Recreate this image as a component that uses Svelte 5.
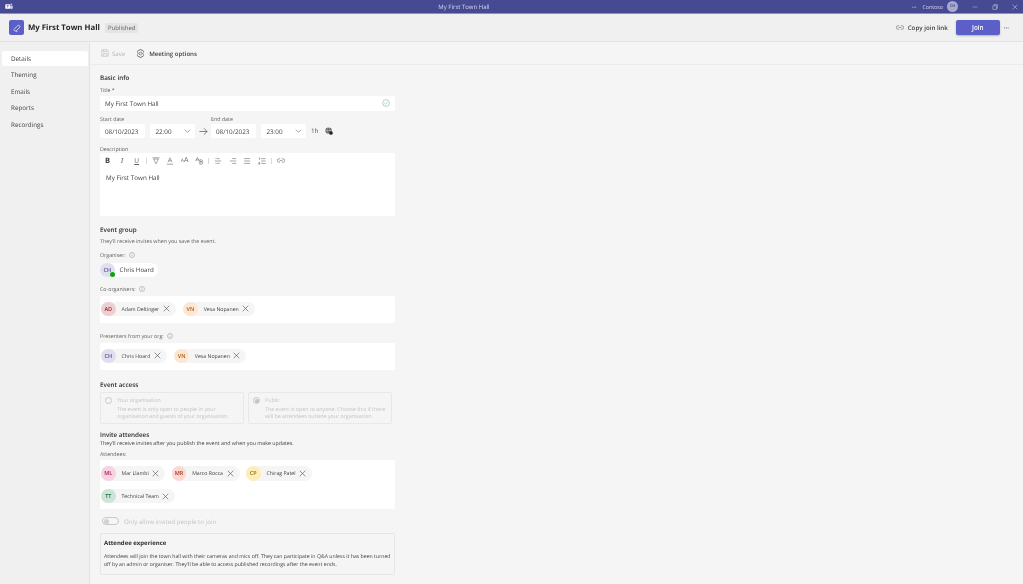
<script lang="ts">
  const nav = ['Details', 'Theming', 'Emails', 'Reports', 'Recordings'];

  const coOrganisers = [
    { initials: 'AD', name: 'Adam Deltinger', tone: 'red' },
    { initials: 'VN', name: 'Vesa Nopanen', tone: 'orange' }
  ];
  const presenters = [
    { initials: 'CH', name: 'Chris Hoard', tone: 'violet' },
    { initials: 'VN', name: 'Vesa Nopanen', tone: 'orange' }
  ];
  const attendees = [
    { initials: 'ML', name: 'Mar Llambi', tone: 'pink' },
    { initials: 'MR', name: 'Marco Rocca', tone: 'salmon' },
    { initials: 'CP', name: 'Chirag Patel', tone: 'yellow' },
    { initials: 'TT', name: 'Technical Team', tone: 'green' }
  ];
</script>

{#snippet info()}
  <svg class="info" viewBox="0 0 10 10" width="6" height="6">
    <circle cx="5" cy="5" r="4.2" fill="none" stroke="#888" stroke-width="0.8" />
    <path d="M5 4.4v2.8M5 2.6v.8" stroke="#888" stroke-width="0.8" />
  </svg>
{/snippet}

{#snippet chip(p)}
  <div class="chip">
    <span class="avatar {p.tone}">{p.initials}</span>
    <span class="chip-name">{p.name}</span>
    <svg viewBox="0 0 10 10" width="7" height="7">
      <path d="M1 1l8 8M9 1l-8 8" stroke="#424242" stroke-width="0.8" fill="none" />
    </svg>
  </div>
{/snippet}

{#snippet chevron()}
  <svg class="chev" viewBox="0 0 10 6" width="7" height="4">
    <path d="M1 1l4 4 4-4" stroke="#616161" stroke-width="0.9" fill="none" />
  </svg>
{/snippet}

<div class="app">
  <div class="titlebar">
    <svg class="teams" viewBox="0 0 12 10" width="8" height="7">
      <circle cx="9.4" cy="2" r="1.4" fill="#c5c8ef" />
      <path d="M7.5 4h4.2v3a2 2 0 0 1-4.2 0z" fill="#c5c8ef" />
      <rect x="0.5" y="1.5" width="7" height="7" rx="0.8" fill="#fff" />
      <path d="M2.2 3.4h3.6M4 3.4v3.4" stroke="#464a92" stroke-width="0.9" />
    </svg>
    <span class="window-title">My First Town Hall</span>
    <div class="window-right">
      <span class="dots">···</span>
      <span class="tenant">Contoso</span>
      <span class="me">CH</span>
      <svg viewBox="0 0 10 10" width="6" height="6"><path d="M1 5h8" stroke="#c9cbe6" stroke-width="0.8" /></svg>
      <svg viewBox="0 0 10 10" width="6" height="6"><path d="M1.5 3h6v6h-6zM3.5 3V1h5.500v6H7.500" stroke="#c9cbe6" stroke-width="0.9" fill="none" /></svg>
      <svg viewBox="0 0 10 10" width="6" height="6"><path d="M1 1l8 8M9 1l-8 8" stroke="#c9cbe6" stroke-width="0.9" /></svg>
    </div>
  </div>

  <header class="header">
    <span class="event-icon">
      <svg viewBox="0 0 12 12" width="10" height="10">
        <path d="M2.500 7.500 7.500 2.500c1.200.2 2 1 2.200 2.200L4.800 9.700c-1.200.3-2.700-.9-2.300-2.200z" fill="none" stroke="#fff" stroke-width="0.8" />
        <path d="M4.800 9.700c.3.800 1.200 1 1.800.4" fill="none" stroke="#fff" stroke-width="0.8" />
      </svg>
    </span>
    <h1>My First Town Hall</h1>
    <span class="badge">Published</span>
    <div class="header-right">
      <svg viewBox="0 0 14 8" width="8" height="5">
        <path d="M5.500 1H3.500a3 3 0 0 0 0 6h2M8.500 1h2a3 3 0 0 1 0 6h-2M4.500 4h5" fill="none" stroke="#616161" stroke-width="1" />
      </svg>
      <span class="copy">Copy join link</span>
      <button class="join" type="button">Join</button>
      <span class="more">···</span>
    </div>
  </header>

  <div class="body">
    <nav class="side">
      {#each nav as item, i}
        <div class="nav-item" class:active={i === 0}>{item}</div>
      {/each}
    </nav>

    <main class="main">
      <div class="toolbar">
        <span class="save">
          <svg viewBox="0 0 10 10" width="8" height="8">
            <path d="M1 1h6.500L9 2.500V9H1zM3 1v2.500h3.500V1M2.800 9V5.800h4.400V9" fill="none" stroke="#bdbdbd" stroke-width="0.8" />
          </svg>
          Save
        </span>
        <span class="options">
          <svg viewBox="0 0 10 10" width="9" height="9">
            <circle cx="5" cy="5" r="1.500" fill="none" stroke="#555" stroke-width="0.7" />
            <path d="M4 .6h2l.4 1.300 1.300-.4 1 1.700-1 1 0 1.600 1 1-1 1.700-1.300-.4L6 9.400H4l-.4-1.300-1.300.4-1-1.700 1-1V4.200l-1-1 1-1.700 1.300.4z" fill="none" stroke="#555" stroke-width="0.7" />
          </svg>
          Meeting options
        </span>
      </div>

      <div class="form">
        <h2 class="first">Basic info</h2>
        <div class="label title-label">Title *</div>
        <div class="input title-input">
          <span>My First Town Hall</span>
          <svg viewBox="0 0 10 10" width="8" height="8">
            <circle cx="5" cy="5" r="4.200" fill="none" stroke="#6bb58a" stroke-width="0.7" />
            <path d="M3 5.200l1.500 1.400L7 3.600" fill="none" stroke="#6bb58a" stroke-width="0.7" />
          </svg>
        </div>

        <div class="dates">
          <div class="date-col">
            <div class="label">Start date</div>
            <div class="date-row">
              <div class="input date">08/10/2023</div>
              <div class="input time"><span>22:00</span>{@render chevron()}</div>
            </div>
          </div>
          <svg class="arrow" viewBox="0 0 10 10" width="9" height="9">
            <path d="M.5 5h8.500M5.500 1.500 9 5 5.500 8.500" fill="none" stroke="#424242" stroke-width="0.7" />
          </svg>
          <div class="date-col">
            <div class="label">End date</div>
            <div class="date-row">
              <div class="input date">08/10/2023</div>
              <div class="input time"><span>23:00</span>{@render chevron()}</div>
            </div>
          </div>
          <span class="duration">1h</span>
          <svg class="globe" viewBox="0 0 10 10" width="8" height="8">
            <circle cx="4.500" cy="4.500" r="4" fill="#616161" />
            <path d="M.5 4.500h8M4.500.5c-2.500 2.500-2.500 5.500 0 8M4.500.5c2.500 2.500 2.500 5.500 0 8" fill="none" stroke="#eee" stroke-width="0.5" />
            <circle cx="7.500" cy="7.500" r="2.300" fill="#242424" />
          </svg>
        </div>

        <div class="label desc-label">Description</div>
        <div class="editor">
          <div class="rte">
            <b class="bold">B</b>
            <i class="ital">I</i>
            <span class="under">U</span>
            <span class="sep"></span>
            <svg viewBox="0 0 10 10" width="8" height="8"><path d="M.5 1h9M2 2.500 5 8.500 8 2.500z" fill="none" stroke="#616161" stroke-width="0.7" /></svg>
            <svg viewBox="0 0 10 10" width="8" height="8"><path d="M2.500 6.500 5 1l2.500 5.500M3.400 4.700h3.200M1 9h8" fill="none" stroke="#616161" stroke-width="0.7" /></svg>
            <span class="aa"><small>A</small>A</span>
            <svg viewBox="0 0 10 10" width="8" height="8"><path d="M.8 5 3 .6 5.200 5M1.500 3.600h3M6 3.500h2a1 1 0 0 1 0 2.500H6zM6 6h2.200a1.300 1.300 0 0 1 0 3H6z" fill="none" stroke="#616161" stroke-width="0.7" /></svg>
            <span class="sep"></span>
            <svg viewBox="0 0 10 10" width="8" height="8"><path d="M1 5h8M3 2h4M3 8h4M1 2h.8M1 8h.8" fill="none" stroke="#616161" stroke-width="0.7" /></svg>
            <svg viewBox="0 0 10 10" width="8" height="8"><path d="M1 5h8M4 2h5M4 8h5" fill="none" stroke="#616161" stroke-width="0.7" /></svg>
            <svg viewBox="0 0 10 10" width="8" height="8"><path d="M1.500 2H9M1.500 5H9M1.500 8H9" fill="none" stroke="#616161" stroke-width="0.7" /></svg>
            <svg viewBox="0 0 10 10" width="8" height="8"><path d="M4 2h5.500M4 5h5.500M4 8h5.500M1 1h1v2.500M.8 7h1.500v1H1v1h1.400" fill="none" stroke="#616161" stroke-width="0.7" /></svg>
            <span class="sep"></span>
            <svg viewBox="0 0 14 8" width="8" height="5"><path d="M5.500 1H3.500a3 3 0 0 0 0 6h2M8.500 1h2a3 3 0 0 1 0 6h-2M4.500 4h5" fill="none" stroke="#616161" stroke-width="1" /></svg>
          </div>
          <p>My First Town Hall</p>
        </div>

        <h2 class="group-title">Event group</h2>
        <div class="hint">They'll receive invites when you save the event.</div>
        <div class="label organiser-label">Organiser: {@render info()}</div>
        <div class="organiser">
          <span class="avatar violet">CH<span class="presence"></span></span>
          <span class="organiser-name">Chris Hoard</span>
        </div>

        <div class="label people-label coorg">Co-organisers: {@render info()}</div>
        <div class="people">
          {#each coOrganisers as p}{@render chip(p)}{/each}
        </div>

        <div class="label people-label presenters">Presenters from your org: {@render info()}</div>
        <div class="people">
          {#each presenters as p}{@render chip(p)}{/each}
        </div>

        <h2 class="access-title">Event access</h2>
        <div class="access">
          <div class="card">
            <span class="radio"></span>
            <div>
              <div class="card-title">Your organisation</div>
              <div class="card-text">The event is only open to people in your organisation and guests of your organisation.</div>
            </div>
          </div>
          <div class="card">
            <span class="radio on"></span>
            <div>
              <div class="card-title">Public</div>
              <div class="card-text">The event is open to anyone. Choose this if there will be attendees outside your organisation.</div>
            </div>
          </div>
        </div>

        <h2 class="invite-title">Invite attendees</h2>
        <div class="invite-hint">They'll receive invites after you publish the event and when you make updates.</div>
        <div class="label attendees-label">Attendees:</div>
        <div class="people attendees">
          {#each attendees as p}{@render chip(p)}{/each}
        </div>

        <div class="only">
          <span class="toggle"><span class="knob"></span></span>
          <span>Only allow invited people to join</span>
        </div>

        <div class="experience">
          <h3>Attendee experience</h3>
          <p>Attendees will join the town hall with their cameras and mics off. They can participate in Q&amp;A unless it has been turned off by an admin or organiser. They'll be able to access published recordings after the event ends.</p>
        </div>
      </div>
    </main>
  </div>
</div>

<style>
  :global(body) {
    margin: 0;
    background: #f5f5f5;
  }

  .app {
    width: 1023px;
    height: 584px;
    overflow: hidden;
    display: flex;
    flex-direction: column;
    font-family: 'Open Sans', 'Noto Sans', sans-serif;
    text-rendering: geometricPrecision;
    will-change: transform;
    color: #424242;
    font-size: 5.5px;
  }

  .titlebar {
    flex: 0 0 14px;
    box-sizing: border-box;
    display: flex;
    align-items: center;
    background: #464a92;
    border-bottom: 1px solid #8c8fbf;
    padding: 0 5px;
    color: #d6d7ec;
  }

  .teams {
    flex: none;
  }

  .window-title {
    flex: 1;
    text-align: center;
    font-size: 6px;
    padding-left: 3px;
  }

  .window-right {
    display: flex;
    align-items: center;
    font-size: 5.3px;
  }

  .dots {
    margin-right: 6px;
    font-weight: 700;
  }

  .tenant {
    margin-right: 4px;
  }

  .me {
    width: 11px;
    height: 11px;
    border-radius: 50%;
    background: #a8a9cf;
    color: #3c3f80;
    font-size: 4px;
    font-weight: 600;
    display: flex;
    align-items: center;
    justify-content: center;
  }

  .window-right svg {
    margin-left: 14px;
  }

  .header {
    flex: 0 0 28px;
    box-sizing: border-box;
    display: flex;
    align-items: center;
    background: #f0f0f0;
    border-bottom: 1px solid #e3e3e3;
    padding: 0 9px;
  }

  .event-icon {
    width: 15px;
    height: 15px;
    border-radius: 2px;
    background: #5b5fc7;
    display: flex;
    align-items: center;
    justify-content: center;
    margin-right: 4px;
  }

  h1 {
    margin: 0;
    font-size: 7.8px;
    font-weight: 700;
    color: #242424;
    margin-right: 5px;
  }

  .badge {
    background: #e4e4e4;
    color: #616161;
    font-size: 6px;
    padding: 1px 3px;
    border-radius: 1.500px;
  }

  .header-right {
    margin-left: auto;
    display: flex;
    align-items: center;
  }

  .copy {
    font-size: 6.2px;
    font-weight: 600;
    margin: 0 8px 0 4px;
  }

  .join {
    width: 44px;
    height: 15px;
    border: 0;
    border-radius: 2px;
    background: #5b5fc7;
    color: #fff;
    font: 600 6.3px 'Open Sans', sans-serif;
    box-shadow: 0 1px 2px rgba(0, 0, 0, 0.25);
    padding: 0;
  }

  .more {
    margin: 0 5px 0 4px;
    font-size: 6px;
    font-weight: 700;
    color: #616161;
  }

  .body {
    flex: 1;
    display: flex;
    min-height: 0;
  }

  .side {
    flex: 0 0 90px;
    box-sizing: border-box;
    background: #f0f0f0;
    border-right: 1px solid #e3e3e3;
    padding: 9px 1px 0 2px;
  }

  .nav-item {
    height: 15px;
    margin-bottom: 1.400px;
    padding-left: 9px;
    display: flex;
    align-items: center;
    border-radius: 2px;
    font-size: 6.3px;
    color: #424242;
  }

  .nav-item.active {
    background: #fff;
  }

  .main {
    flex: 1;
    min-width: 0;
    background: #f5f5f5;
  }

  .toolbar {
    height: 22px;
    border-bottom: 1px solid #ebebeb;
    display: flex;
    align-items: center;
    padding-left: 11px;
    font-size: 6.1px;
  }

  .save {
    display: flex;
    align-items: center;
    gap: 3px;
    color: #b5b5b5;
    margin-right: 11px;
  }

  .options {
    display: flex;
    align-items: center;
    gap: 4px;
    font-weight: 600;
    color: #424242;
  }

  .form {
    width: 295px;
    padding-left: 10px;
  }

  h2 {
    margin: 0;
    font-size: 6.3px;
    line-height: 9px;
    font-weight: 600;
    color: #303030;
  }

  h2.first {
    margin-top: 8px;
  }

  .label {
    font-size: 5.3px;
    line-height: 7px;
    color: #616161;
    display: flex;
    align-items: center;
    gap: 3px;
  }

  .title-label {
    margin-top: 5px;
    margin-bottom: 2px;
  }

  .input {
    background: #fff;
    border-radius: 1.500px;
    box-sizing: border-box;
    display: flex;
    align-items: center;
    font-size: 6.300px;
    color: #424242;
  }

  .title-input {
    height: 14.500px;
    padding: 0 5px 0 5px;
    justify-content: space-between;
  }

  .dates {
    display: flex;
    align-items: flex-end;
    margin-top: 5px;
  }

  .date-col .label {
    margin-bottom: 1.500px;
  }

  .date-row {
    display: flex;
    gap: 4.500px;
  }

  .date {
    width: 45px;
    height: 14px;
    padding-left: 5px;
  }

  .time {
    width: 45px;
    height: 14px;
    padding: 0 4px 0 6px;
    justify-content: space-between;
  }

  .arrow {
    margin: 0 3.500px 2.500px 4px;
  }

  .duration {
    margin: 0 0 3px 5.500px;
    font-size: 6.300px;
    color: #4f4f7a;
  }

  .globe {
    margin: 0 0 3px 6.500px;
  }

  .desc-label {
    margin-top: 8px;
  }

  .editor {
    height: 63px;
    background: #fff;
    border-radius: 1.500px;
  }

  .rte {
    height: 15px;
    display: flex;
    align-items: center;
    padding-left: 3.600px;
    gap: 6.500px;
    font-size: 7.500px;
    color: #616161;
  }

  .rte > b,
  .rte > i,
  .rte > span:not(.sep),
  .rte > svg {
    flex: 0 0 8px;
    text-align: center;
  }

  .bold {
    color: #424242;
  }

  .ital {
    font-family: 'Liberation Serif', serif;
  }

  .under {
    text-decoration: underline;
    font-size: 6.500px;
  }

  .aa small {
    font-size: 5px;
  }

  .aa {
    font-size: 7px;
    line-height: 8px;
    white-space: nowrap;
  }

  .sep {
    width: 1px;
    height: 6px;
    background: #d8d8d8;
    margin: 0 -1.500px;
  }

  .editor p {
    margin: 5px 0 0 6px;
    font-size: 6.300px;
  }

  .group-title {
    margin-top: 9px;
  }

  .hint {
    margin-top: 3.500px;
    line-height: 7px;
    font-size: 5.300px;
    color: #616161;
  }

  .organiser-label {
    margin-top: 7px;
    margin-bottom: 4px;
  }

  .organiser {
    display: inline-flex;
    align-items: center;
    height: 14.500px;
    background: #fff;
    border-radius: 8px;
    padding-right: 4px;
    font-size: 6.200px;
    gap: 5px;
  }

  .avatar {
    flex: none;
    position: relative;
    width: 14.500px;
    height: 14.500px;
    border-radius: 50%;
    display: flex;
    align-items: center;
    justify-content: center;
    font-size: 5.500px;
    font-weight: 600;
  }

  .presence {
    position: absolute;
    right: 0;
    bottom: 0;
    width: 5px;
    height: 5px;
    border-radius: 50%;
    background: #13a10e;
  }

  .violet { background: #e0dff0; color: #4f4b8f; }
  .red { background: #eccfd2; color: #a4262c; }
  .orange { background: #fde7d3; color: #a8591a; }
  .pink { background: #f7d3e2; color: #a12260; }
  .salmon { background: #fbd9d3; color: #a8391f; }
  .yellow { background: #fdeeb9; color: #8f6a10; }
  .green { background: #cfe4d8; color: #1f6f48; }

  .people-label {
    margin-top: 7.500px;
    margin-bottom: 3px;
  }

  .coorg {
    margin-top: 8.500px;
  }

  .presenters {
    margin-top: 10px;
  }

  .people {
    background: #fff;
    min-height: 27px;
    box-sizing: border-box;
    padding: 6px 1px;
    display: flex;
    flex-wrap: wrap;
    gap: 7px 7.500px;
    border-radius: 1.500px;
  }

  .chip {
    display: flex;
    align-items: center;
    height: 14.500px;
    background: #f5f5f5;
    border-radius: 8px;
    font-size: 5.200px;
    color: #424242;
    padding-right: 6px;
  }

  .chip-name {
    margin: 0 3.500px 0 6px;
  }

  .access-title {
    margin-top: 10.500px;
  }

  .access {
    display: flex;
    gap: 4px;
    margin-top: 2.500px;
  }

  .card {
    width: 144px;
    height: 32px;
    box-sizing: border-box;
    border: 1px solid #e8e8e8;
    border-radius: 2px;
    display: flex;
    padding: 4px 4px 0 4px;
    gap: 5px;
    color: #c4c4c4;
    font-size: 5.300px;
    line-height: 7px;
  }

  .card-title {
    margin-bottom: 2.500px;
  }

  .radio {
    flex: none;
    width: 7px;
    height: 7px;
    border-radius: 50%;
    border: 0.700px solid #c8c8c8;
    box-sizing: border-box;
    margin-top: 0.500px;
    display: flex;
    align-items: center;
    justify-content: center;
  }

  .radio.on::after {
    content: '';
    width: 4px;
    height: 4px;
    border-radius: 50%;
    background: #c4c4c4;
  }

  .invite-title {
    margin-top: 7px;
    line-height: 8px;
  }

  .invite-hint {
    margin-top: 1px;
    font-size: 5.300px;
    line-height: 7px;
    color: #424242;
  }

  .attendees-label {
    margin-top: 4px;
    margin-bottom: 2.500px;
  }

  .attendees {
    min-height: 49px;
    padding: 6px 60px 5px 1px;
    gap: 7.500px 6.500px;
  }

  .only {
    display: flex;
    align-items: center;
    gap: 5px;
    margin-top: 7.500px;
    padding-left: 2px;
    height: 9px;
    font-size: 6.200px;
    color: #c4c4c4;
  }

  .toggle {
    width: 17px;
    height: 8px;
    box-sizing: border-box;
    border: 0.700px solid #c8c8c8;
    border-radius: 4px;
    display: flex;
    align-items: center;
    padding-left: 1px;
  }

  .knob {
    width: 5px;
    height: 5px;
    border-radius: 50%;
    background: #d0d0d0;
  }

  .experience {
    margin-top: 7.500px;
    height: 42px;
    box-sizing: border-box;
    border: 1px solid #e6e6e6;
    border-radius: 2px;
    padding: 5px 3px 0 3px;
  }

  h3 {
    margin: 0;
    font-size: 6px;
    line-height: 8px;
    font-weight: 700;
    color: #303030;
  }

  .experience p {
    margin: 6px 0 0;
    font-size: 5.200px;
    line-height: 7.500px;
    color: #424242;
  }
</style>
